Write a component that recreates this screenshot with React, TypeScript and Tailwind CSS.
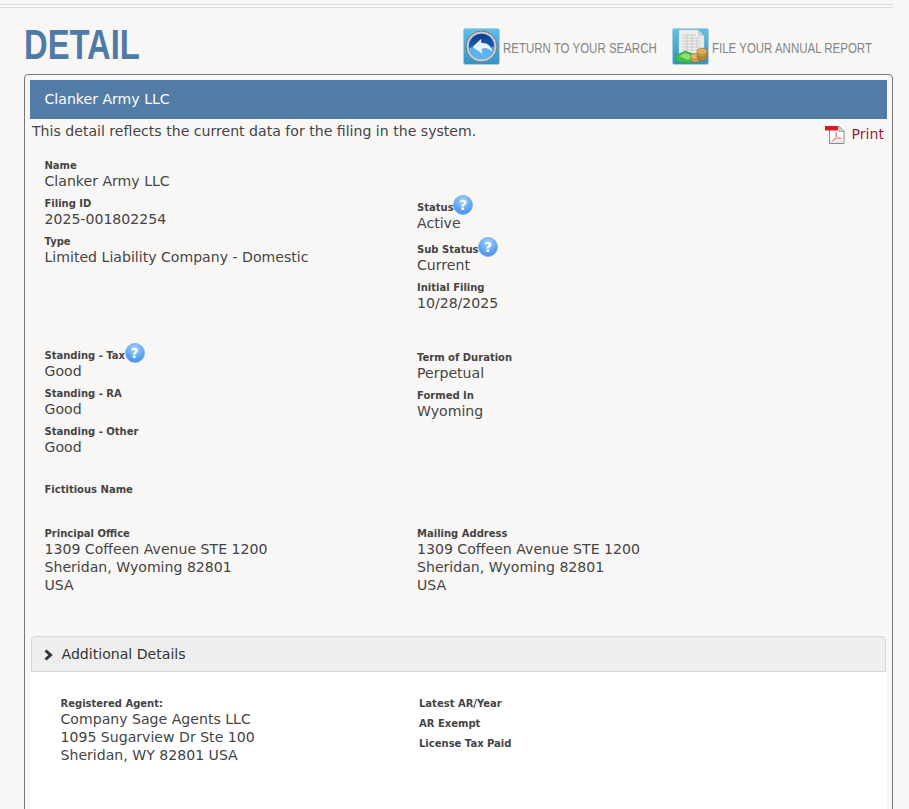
import type { ReactNode } from 'react';

const dejavu = 'font-["DejaVu_Sans",sans-serif]';

function HelpIcon() {
  return (
    <span className="-ml-[0.5px] inline-flex h-5 w-5 shrink-0 items-center justify-center rounded-full border border-[#7fb4ea] bg-[radial-gradient(circle_at_50%_25%,#a8d4fb,#5aa2f2_60%,#3d86dc)] text-[14px] font-bold leading-none text-white">
      ?
    </span>
  );
}

function Field({ label, help, children }: { label: string; help?: boolean; children?: ReactNode }) {
  return (
    <div className="pb-[5px]">
      {help ? (
        <div className="flex h-[19px] items-start">
          <span className="mt-[5px] text-[10px] font-bold leading-4 text-[#444]">{label}</span>
          <HelpIcon />
        </div>
      ) : (
        <div className="h-[15px] text-[10px] font-bold leading-[18px] text-[#444]">{label}</div>
      )}
      <div className="min-h-[18px] text-[14.1px] leading-[18px] text-[#444]">{children}</div>
    </div>
  );
}

function ReturnIcon() {
  return (
    <svg width="37" height="37" viewBox="0 0 37 37" aria-hidden="true">
      <defs>
        <linearGradient id="tileA" x1="0" y1="0" x2="0" y2="1">
          <stop offset="0" stopColor="#62c0e6" />
          <stop offset="1" stopColor="#2f93c4" />
        </linearGradient>
        <linearGradient id="ballA" x1="0" y1="0" x2="0" y2="1">
          <stop offset="0" stopColor="#0c3a8a" />
          <stop offset="0.6" stopColor="#1d66c2" />
          <stop offset="1" stopColor="#3f95e6" />
        </linearGradient>
      </defs>
      <rect x="0.5" y="0.5" width="36" height="36" rx="2" fill="url(#tileA)" stroke="#a8cfe0" />
      <circle cx="18.5" cy="18.5" r="15.5" fill="#c9ccd2" stroke="#6f7884" />
      <circle cx="18.5" cy="18.5" r="12.8" fill="url(#ballA)" />
      <path d="M6 20 C12 17 24 24 31 18 C30 27 25 31 18.5 31 C11 31 7 26 6 20 Z" fill="#5fb2f0" />
      <path d="M18 11 L9.5 19 L19.5 26 L18.5 21 C22.5 19.5 26 20.5 29.5 24 C28 17.5 24 14.5 18.5 15 Z" fill="#e8f3fb" />
    </svg>
  );
}

function ReportIcon() {
  return (
    <svg width="37" height="37" viewBox="0 0 37 37" aria-hidden="true">
      <defs>
        <linearGradient id="tileB" x1="0" y1="0" x2="0" y2="1">
          <stop offset="0" stopColor="#62c0e6" />
          <stop offset="1" stopColor="#2f93c4" />
        </linearGradient>
      </defs>
      <rect x="0.5" y="0.5" width="36" height="36" rx="2" fill="url(#tileB)" stroke="#a8cfe0" />
      <path d="M7 2 H26 L32 8 V27 H7 Z" fill="#eeeeec" stroke="#c2c5c5" strokeWidth="0.5" />
      <path d="M26 2 V8 H32 Z" fill="#cfd2d2" />
      <path
        d="M10 7 H24 M10 10 H29 M10 13 H29 M10 16 H29 M10 19 H29 M10 22 H29 M15 7 V24 M20 7 V24 M25 10 V24"
        stroke="#c3c5c5"
        strokeWidth="0.8"
        fill="none"
      />
      <path d="M3 28 L13 23 L27 28 L18 35 L6 34 Z" fill="#3fbf49" stroke="#2a8f38" strokeWidth="0.6" />
      <path d="M7 28 L13 25 L22 28.5 L16 32 Z" fill="#8fe07d" />
      <ellipse cx="23.5" cy="31" rx="5" ry="3.2" fill="#d5a24a" stroke="#8a6120" strokeWidth="0.5" />
      <ellipse cx="23.5" cy="28.5" rx="5" ry="3.2" fill="#e0b25c" stroke="#8a6120" strokeWidth="0.5" />
      <ellipse cx="30" cy="29" rx="5" ry="3.4" fill="#b98835" stroke="#8a6120" strokeWidth="0.5" />
      <ellipse cx="30" cy="26" rx="5" ry="3.4" fill="#c99a45" stroke="#8a6120" strokeWidth="0.5" />
      <ellipse cx="30" cy="23.5" rx="5" ry="3.4" fill="#dcae58" stroke="#8a6120" strokeWidth="0.5" />
    </svg>
  );
}

function PdfIcon() {
  return (
    <svg width="20" height="20" viewBox="0 0 20 20" aria-hidden="true">
      <path d="M4.5 1.5 H14 L19 6.5 V18.5 H4.5 Z" fill="#fff" stroke="#8b8b8b" />
      <path d="M14 1.5 V6.5 H19 Z" fill="#dcdcdc" stroke="#8b8b8b" strokeWidth="0.7" />
      <path d="M5 15.5 H18.5 V18 H5 Z" fill="#e6e6e6" />
      <rect x="0" y="1" width="13" height="4.5" fill="#dc1a24" />
      <path
        d="M8 16 C10.5 14 12 9 11.2 7 C10.6 8 11 11 14 13.5 C15.5 14.3 17 14 16 13.2 C14.5 12.6 10.5 13.2 7.6 16 Z"
        fill="none"
        stroke="#e8706a"
        strokeWidth="0.9"
      />
    </svg>
  );
}

function HeaderLink({ icon, label, width }: { icon: ReactNode; label: string; width: string }) {
  return (
    <a className="flex items-start gap-[3px]">
      {icon}
      <span
        className={`mt-[11px] origin-left scale-x-[0.82] whitespace-nowrap font-["Liberation_Sans",sans-serif] text-[14px] leading-[18px] text-[#858585] ${width}`}
      >
        {label}
      </span>
    </a>
  );
}

export default function App() {
  return (
    <div className={`h-[809px] w-[909px] overflow-hidden bg-[#f9f7f5] ${dejavu}`}>
      <div className="w-[893px]">
        <div className="mt-1 h-[3px] border-t border-[#dedede]" />
        <div className="border-t border-[#dedede]" />

        <div className="flex h-[66px] items-start justify-between pl-6 pr-[21px]">
          <h1 className='mt-[15px] w-[114px] origin-left scale-x-[0.78] font-["Liberation_Sans",sans-serif] text-[42px] font-bold leading-[44px] text-[#4f7aa6]'>
            DETAIL
          </h1>
          <div className="mt-5 flex gap-[15px]">
            <HeaderLink icon={<ReturnIcon />} label="RETURN TO YOUR SEARCH" width="w-[154px]" />
            <HeaderLink icon={<ReportIcon />} label="FILE YOUR ANNUAL REPORT" width="w-[160px]" />
          </div>
        </div>

        <div className="ml-6 h-[800px] rounded-t border border-[#777] px-[5px] pt-[5px]">
          <div className="flex h-[39px] items-center bg-[#527ba6] pl-[14.5px] text-[14.1px] text-white">
            Clanker Army LLC
          </div>

          <div className="flex h-[38px] justify-between pl-[2px] pr-[3px]">
            <p className="mt-[3px] text-[14.1px] leading-[18px] text-[#444]">
              This detail reflects the current data for the filing in the system.
            </p>
            <a className="mt-[5px] flex h-5 items-center gap-[7px] pt-px text-[14.1px] text-[#9a1b3e]">
              <PdfIcon />
              Print
            </a>
          </div>

          <div className="pl-[14.5px]">
            <div className="grid h-[160px] grid-cols-[372.5px_1fr]">
              <div>
                <Field label="Name">Clanker Army LLC</Field>
                <Field label="Filing ID">2025-001802254</Field>
                <Field label="Type">Limited Liability Company - Domestic</Field>
              </div>
              <div className="pt-[38px]">
                <Field label="Status" help>Active</Field>
                <Field label="Sub Status" help>Current</Field>
                <Field label="Initial Filing">10/28/2025</Field>
              </div>
            </div>

            <div className="mt-[26px] grid h-[118px] grid-cols-[372.5px_1fr]">
              <div>
                <Field label="Standing - Tax" help>Good</Field>
                <Field label="Standing - RA">Good</Field>
                <Field label="Standing - Other">Good</Field>
              </div>
              <div className="pt-[6px]">
                <Field label="Term of Duration">Perpetual</Field>
                <Field label="Formed In">Wyoming</Field>
              </div>
            </div>

            <div className="mt-5">
              <Field label="Fictitious Name" />
            </div>

            <div className="mt-1.5 grid grid-cols-[372.5px_1fr]">
              <Field label="Principal Office">
                1309 Coffeen Avenue STE 1200<br />Sheridan, Wyoming 82801<br />USA
              </Field>
              <Field label="Mailing Address">
                1309 Coffeen Avenue STE 1200<br />Sheridan, Wyoming 82801<br />USA
              </Field>
            </div>
          </div>

          <div className="mx-px mt-[37px] flex h-9 items-center gap-[9px] rounded-t-sm border border-[#d3d6da] bg-[#eeeeee] pl-[10.5px] pt-px text-[14.1px] text-[#333]">
            <svg width="10" height="12" viewBox="0 0 10 12" aria-hidden="true">
              <path d="M2.5 1.5 L7.5 6 L2.5 10.5" fill="none" stroke="#333" strokeWidth="3" />
            </svg>
            Additional Details
          </div>

          <div className="grid h-[300px] grid-cols-[358.5px_1fr] bg-white pl-[30.5px] pt-[23px]">
            <Field label="Registered Agent:">
              Company Sage Agents LLC<br />1095 Sugarview Dr Ste 100<br />Sheridan, WY 82801 USA
            </Field>
            <div className="text-[10px] font-bold leading-5 text-[#444]">
              <div className="-mt-px">Latest AR/Year</div>
              <div>AR Exempt</div>
              <div>License Tax Paid</div>
            </div>
          </div>
        </div>
      </div>
    </div>
  );
}
